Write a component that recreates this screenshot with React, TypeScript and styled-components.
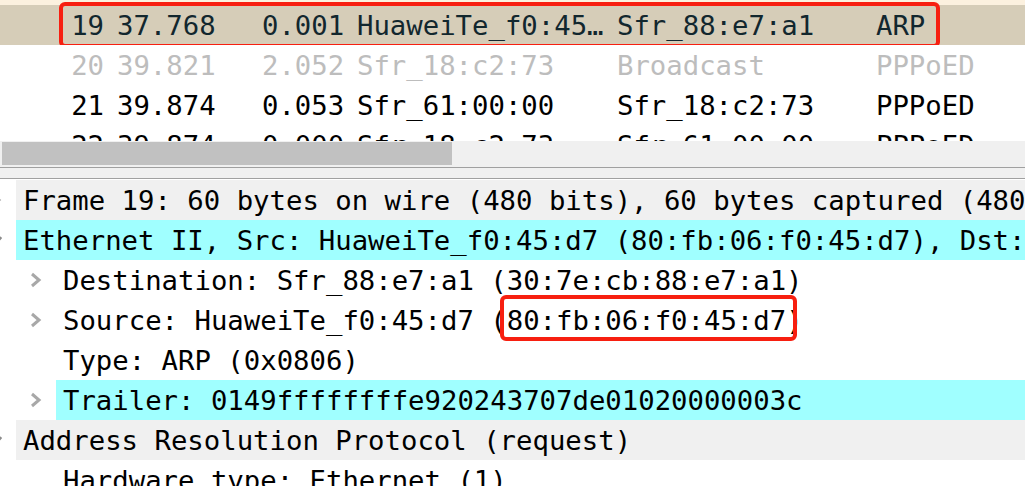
import React from "react";
import styled, { createGlobalStyle } from "styled-components";

const GlobalStyle = createGlobalStyle`
  html, body {
    margin: 0;
    padding: 0;
    background: #ffffff;
    overflow: hidden;
  }
  body {
    font-family: "DejaVu Sans Mono", "Liberation Mono", monospace;
    font-size: 27.3px;
  }
`;

type Packet = {
  no: string;
  time: string;
  delta: string;
  src: string;
  dst: string;
  proto: string;
  tone: "selected" | "muted" | "normal";
};

type Node = {
  level: number;
  arrow: "open" | "closed" | "none";
  bg: "plain" | "gray" | "cyan";
  text: React.ReactNode;
};

const packets: Packet[] = [
  { no: "19", time: "37.768", delta: "0.001", src: "HuaweiTe_f0:45…", dst: "Sfr_88:e7:a1", proto: "ARP", tone: "selected" },
  { no: "20", time: "39.821", delta: "2.052", src: "Sfr_18:c2:73", dst: "Broadcast", proto: "PPPoED", tone: "muted" },
  { no: "21", time: "39.874", delta: "0.053", src: "Sfr_61:00:00", dst: "Sfr_18:c2:73", proto: "PPPoED", tone: "normal" },
  { no: "22", time: "39.874", delta: "0.000", src: "Sfr_18:c2:73", dst: "Sfr_61:00:00", proto: "PPPoED", tone: "normal" },
];

const Page = styled.div`
  width: 1025px;
  height: 486px;
  overflow: hidden;
  background: #ffffff;
`;

const PacketList = styled.div`
  height: 141px;
  overflow: hidden;
`;

const PrevRowEdge = styled.div`
  height: 5px;
  background: #fcf1df;
`;

const rowBg = { selected: "#d6cdb8", muted: "#ffffff", normal: "#ffffff" };
const rowFg = { selected: "#12272e", muted: "#bdbdbd", normal: "#000000" };

const PacketRow = styled.div<{ $tone: Packet["tone"] }>`
  position: relative;
  display: grid;
  grid-template-columns: 117px 145px 95px 260px 259px 1fr;
  height: 40px;
  line-height: 42px;
  white-space: nowrap;
  background: ${(p) => rowBg[p.$tone]};
  color: ${(p) => rowFg[p.$tone]};
`;

const NoCell = styled.span`
  text-align: right;
  padding-right: 13px;
`;

const Cell = styled.span`
  overflow: hidden;
`;

const RowMark = styled.div`
  position: absolute;
  left: 59px;
  right: 85px;
  top: -3px;
  bottom: -3px;
  border: 4px solid #f71f10;
  border-radius: 6px;
  pointer-events: none;
`;

const HScroll = styled.div`
  height: 26px;
  background: #f0f0f0;
  padding: 1px 0 0 2px;
  box-sizing: border-box;
`;

const Thumb = styled.div`
  width: 450px;
  height: 23px;
  background: #c1c1c1;
`;

const Splitter = styled.div`
  height: 10px;
  background: #f0f0f0;
  border-top: 1px solid #a0a0a0;
  border-bottom: 1px solid #a0a0a0;
`;

const Tree = styled.div`
  padding-top: 1px;
`;

const nodeBg = { plain: "#ffffff", gray: "#f0f0f0", cyan: "#a0ffff" };

const TreeRow = styled.div<{ $level: number }>`
  display: flex;
  height: 40px;
  line-height: 42px;
  margin-left: ${(p) => p.$level * 40 - 40}px;
  white-space: nowrap;
`;

const ArrowCell = styled.div`
  width: 56px;
  flex: none;
  display: flex;
  align-items: center;
  padding-left: 30px;
  box-sizing: border-box;
`;

const Label = styled.div<{ $bg: Node["bg"] }>`
  flex: 1;
  padding-left: 7px;
  background: ${(p) => nodeBg[p.$bg]};
  color: #000000;
`;

const MacMark = styled.span`
  position: relative;
  display: inline-block;
  &::after {
    content: "";
    position: absolute;
    left: -7px;
    right: -11px;
    top: -5px;
    bottom: 1px;
    border: 4px solid #f71f10;
    border-radius: 6px;
  }
`;

const Chevron: React.FC<{ open: boolean }> = ({ open }) => (
  <svg width="12" height="16" viewBox="0 0 12 16">
    {open ? (
      <polyline points="1,5 6,11 11,5" fill="none" stroke="#8c8c8c" strokeWidth="3" />
    ) : (
      <polyline points="2,2 9,8 2,14" fill="none" stroke="#a8a8a8" strokeWidth="3" />
    )}
  </svg>
);

const nodes: Node[] = [
  { level: 0, arrow: "closed", bg: "gray", text: "Frame 19: 60 bytes on wire (480 bits), 60 bytes captured (480 bits)" },
  { level: 0, arrow: "open", bg: "cyan", text: "Ethernet II, Src: HuaweiTe_f0:45:d7 (80:fb:06:f0:45:d7), Dst: Sfr_88:e7:a1" },
  { level: 1, arrow: "closed", bg: "plain", text: "Destination: Sfr_88:e7:a1 (30:7e:cb:88:e7:a1)" },
  {
    level: 1,
    arrow: "closed",
    bg: "plain",
    text: (
      <>
        Source: HuaweiTe_f0:45:d7 (<MacMark>80:fb:06:f0:45:d7</MacMark>)
      </>
    ),
  },
  { level: 1, arrow: "none", bg: "plain", text: "Type: ARP (0x0806)" },
  { level: 1, arrow: "closed", bg: "cyan", text: "Trailer: 0149ffffffffe920243707de01020000003c" },
  { level: 0, arrow: "open", bg: "gray", text: "Address Resolution Protocol (request)" },
  { level: 1, arrow: "none", bg: "plain", text: "Hardware type: Ethernet (1)" },
];

export default function App() {
  return (
    <Page>
      <GlobalStyle />
      <PacketList>
        <PrevRowEdge />
        {packets.map((p) => (
          <PacketRow key={p.no} $tone={p.tone}>
            <NoCell>{p.no}</NoCell>
            <Cell>{p.time}</Cell>
            <Cell>{p.delta}</Cell>
            <Cell>{p.src}</Cell>
            <Cell>{p.dst}</Cell>
            <Cell>{p.proto}</Cell>
            {p.tone === "selected" && <RowMark />}
          </PacketRow>
        ))}
      </PacketList>
      <HScroll>
        <Thumb />
      </HScroll>
      <Splitter />
      <Tree>
        {nodes.map((n, i) => (
          <TreeRow key={i} $level={n.level}>
            <ArrowCell>{n.arrow !== "none" && <Chevron open={n.arrow === "open"} />}</ArrowCell>
            <Label $bg={n.bg}>{n.text}</Label>
          </TreeRow>
        ))}
      </Tree>
    </Page>
  );
}
